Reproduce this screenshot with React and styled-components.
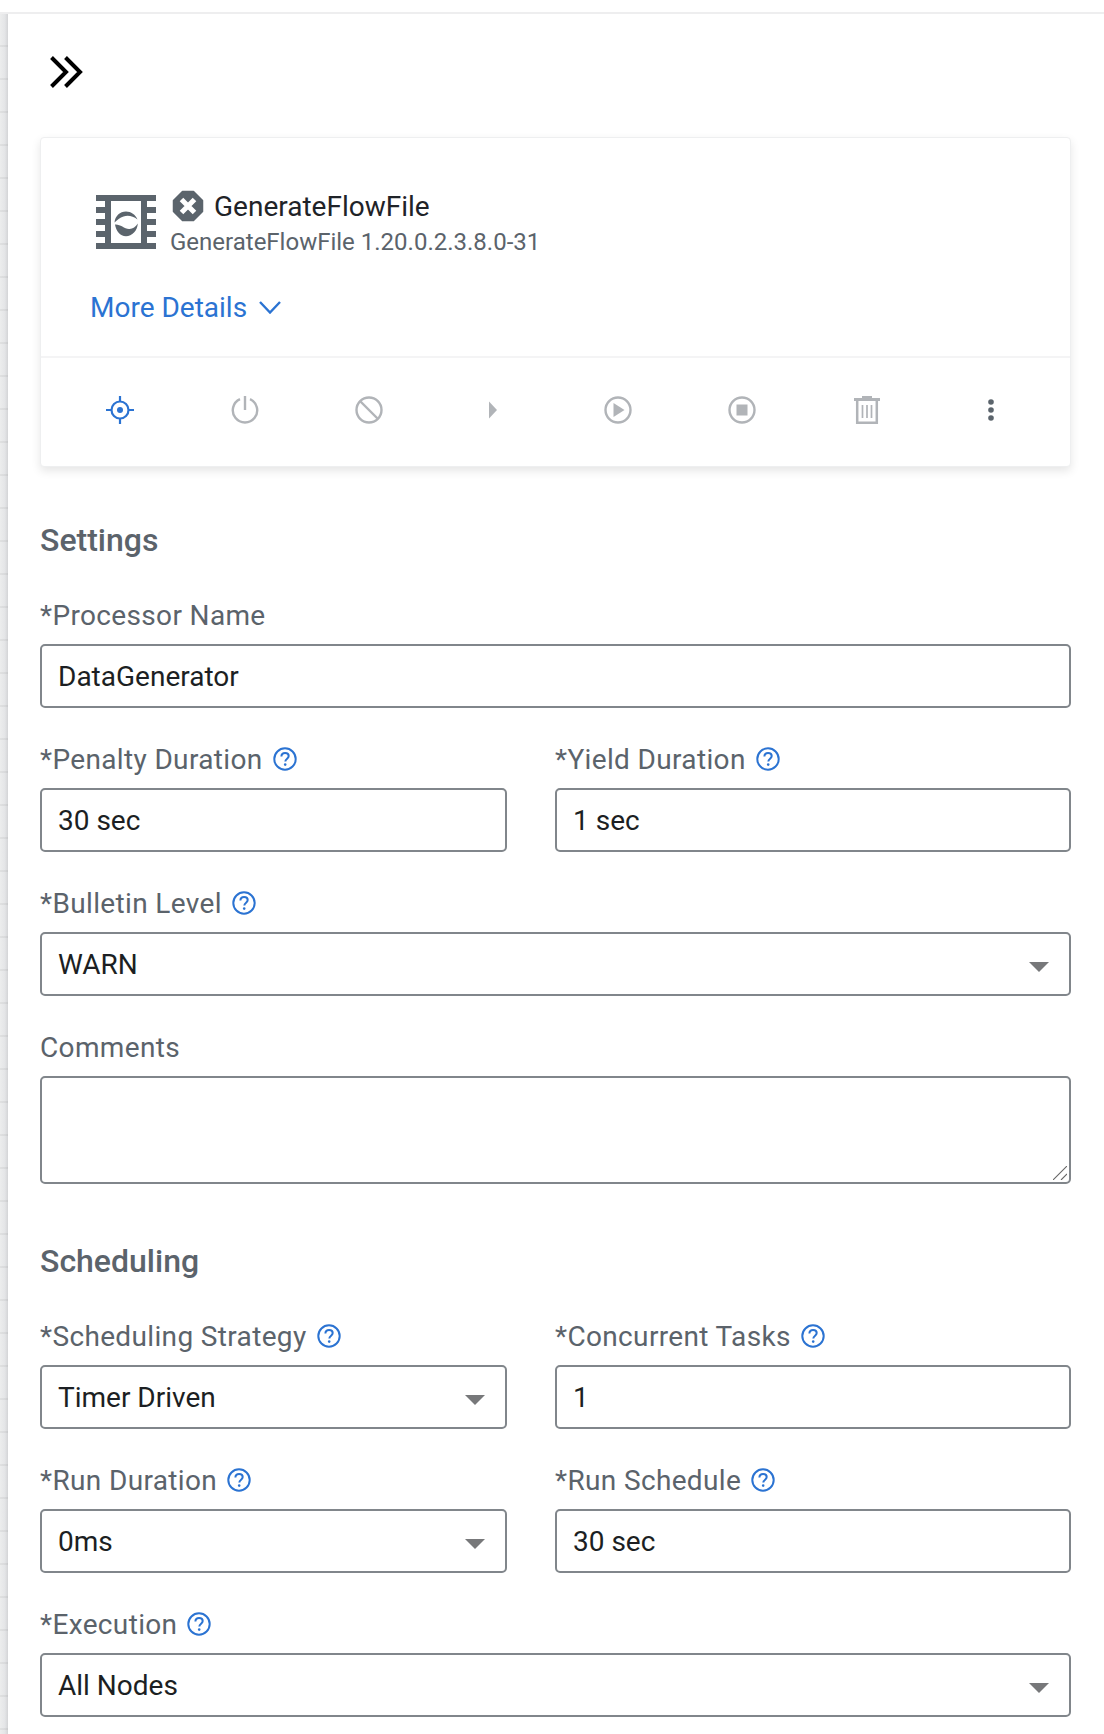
import React from "react";
import styled, { createGlobalStyle } from "styled-components";

const Global = createGlobalStyle`
  html, body { margin: 0; padding: 0; background: #fff; }
  body { font-family: Roboto, "Liberation Sans", sans-serif; }
`;

const Page = styled.div`
  width: 1104px;
  height: 1734px;
  overflow: hidden;
  display: flex;
  flex-direction: column;
  background: #fff;
`;
const TopStrip = styled.div`
  height: 12px;
  flex: none;
  border-bottom: 2px solid #eeeeef;
  background: #fff;
`;
const Body = styled.div`
  flex: 1;
  display: flex;
  min-height: 0;
`;
const Gutter = styled.div`
  width: 8px;
  flex: none;
  background:
    repeating-linear-gradient(180deg, transparent 0 31px, rgba(0,0,0,0.05) 31px 33px),
    linear-gradient(90deg, #eceded, #e4e5e7 60%, #d3d4d6);
`;
const Panel = styled.main`
  flex: 1;
  min-width: 0;
  padding: 42px 33px 0 32px;
  display: flex;
  flex-direction: column;
`;
const CollapseButton = styled.div`
  height: 32px;
  padding-left: 10px;
  display: flex;
  align-items: center;
  margin-bottom: 49px;
`;
const Card = styled.section`
  border-radius: 4px;
  border: 1px solid #eeeff0;
  box-shadow: 0 4px 10px rgba(0, 0, 0, 0.1);
  background: #fff;
  height: 328px;
  display: flex;
  flex-direction: column;
  flex: none;
`;
const CardTop = styled.div`
  height: 220px;
  flex: none;
  padding: 52px 0 0 49px;
  border-bottom: 2px solid #f4f4f5;
  box-sizing: border-box;
`;
const TitleRow = styled.div`
  display: flex;
  align-items: flex-start;
  padding-left: 6px;
`;
const ChipWrap = styled.div`
  margin-top: 5px;
  flex: none;
  line-height: 0;
`;
const TitleText = styled.div`
  margin-left: 14px;
`;
const TitleLine = styled.div`
  display: flex;
  align-items: center;
  height: 32px;
  font-size: 28px;
  color: #1f2328;
  margin-left: 2px;
`;
const TitleLabel = styled.span`
  margin-left: 10px;
`;
const Version = styled.div`
  font-size: 24px;
  color: #5b636b;
  margin-top: 6px;
`;
const MoreDetails = styled.div`
  margin-top: 35px;
  display: flex;
  align-items: center;
  gap: 12px;
  font-size: 28px;
  color: #2b73d2;
`;
const Toolbar = styled.div`
  flex: 1;
  display: grid;
  grid-template-columns: repeat(8, 124.4px);
  padding: 0 0 4px 17px;
  align-items: center;
  justify-items: center;
`;
const SectionTitle = styled.h2`
  margin: 0;
  font-size: 32px;
  font-weight: 500;
  line-height: 38px;
  color: #5b636b;
`;
const Form = styled.div`
  display: flex;
  flex-direction: column;
  padding-top: 54px;
`;
const Fields = styled.div`
  display: grid;
  grid-template-columns: 467px 516px;
  column-gap: 48px;
  row-gap: 36px;
  margin-top: 41px;
  margin-bottom: ${p => p.$after || 0}px;
`;
const Field = styled.div`
  grid-column: ${p => (p.$wide ? "1 / -1" : "auto")};
`;
const Label = styled.div`
  display: flex;
  align-items: center;
  gap: 10px;
  height: 30px;
  margin-bottom: 14px;
  font-size: 28px;
  letter-spacing: 0.35px;
  color: #5b636b;
`;
const Control = styled.div`
  position: relative;
  box-sizing: border-box;
  height: ${p => p.$height || 64}px;
  border: 2px solid #81868b;
  border-radius: 5px;
  padding: 15px 16px 0;
  font-size: 28px;
  line-height: 32px;
  color: #1c1f23;
`;
const Caret = styled.span`
  position: absolute;
  right: 20px;
  top: 28px;
  width: 0;
  height: 0;
  border-left: 10px solid transparent;
  border-right: 10px solid transparent;
  border-top: 10px solid #77787a;
`;
const Grip = styled.svg`
  position: absolute;
  right: 2px;
  bottom: 2px;
`;

const Chevrons = () => (
  <svg width="33" height="32" viewBox="0 0 33 32" fill="none" stroke="#000" strokeWidth="4">
    <path d="M1.500 1.500 L16 16 L1.500 30.500" />
    <path d="M15.500 1.500 L30 16 L15.500 30.500" />
  </svg>
);

const ChipIcon = () => (
  <svg width="60" height="54" viewBox="0 0 60 54">
    <path
      fill="#5b646c"
      fillRule="evenodd"
      d="M0 0H60V6H51V12H60V18H51V24H60V30H51V36H60V42H51V48H60V54H0V48H9V42H0V36H9V30H0V24H9V18H0V12H9V6H0Z M15 6V48H45V6Z"
    />
    <path
      fill="#5b646c"
      d="M18.500 27.500C19 21 24 16.500 30 16.500C35 16.500 39.500 19.500 41.500 24.500C37 21 32 20 27.500 21.500C24 22.500 21 25 18.500 27.500Z"
    />
    <path
      fill="#5b646c"
      d="M19 29.500C24 29 28 33.500 33 34C36.500 34.300 39.500 32 41.800 28.500C41.500 35.500 36 41.300 30 41.300C24 41.300 20 36 19 29.500Z"
    />
  </svg>
);

const StatusIcon = () => (
  <svg width="32" height="32" viewBox="0 0 32 32">
    <path fill="#5b646c" stroke="#5b646c" strokeWidth="1.500" strokeLinejoin="round" d="M10.500 1.500H21.500L30.500 10.500V21.500L21.500 30.500H10.500L1.500 21.500V10.500Z" />
    <path stroke="#fff" strokeWidth="5" d="M9.500 9.500L22.500 22.500M22.500 9.500L9.500 22.500" />
  </svg>
);

const ChevronDown = () => (
  <svg width="22" height="13" viewBox="0 0 22 13" fill="none" stroke="#2b73d2" strokeWidth="2.400">
    <path d="M1 1L11 11.500L21 1" />
  </svg>
);

const Help = () => (
  <svg width="24" height="24" viewBox="0 0 24 24" fill="none">
    <circle cx="12" cy="12" r="10.700" stroke="#2b73d2" strokeWidth="2" />
    <path d="M8.400 9.500c0-2.200 1.600-3.500 3.700-3.500s3.600 1.300 3.600 3.100c0 2.600-3.200 2.600-3.400 5.400" stroke="#2b73d2" strokeWidth="2" />
    <circle cx="12.200" cy="17.600" r="1.300" fill="#2b73d2" />
  </svg>
);

const gray = "#b1b4b8";

const icons = [
  <svg key="a" width="28" height="28" viewBox="0 0 28 28" fill="none" stroke="#2b73d2" strokeWidth="2.200">
    <circle cx="14" cy="14" r="8.500" />
    <circle cx="14" cy="14" r="3" fill="#2b73d2" stroke="none" />
    <path d="M14 0V5.500M14 22.500V28M0 14H5.500M22.500 14H28" />
  </svg>,
  <svg key="b" width="28" height="28" viewBox="0 0 28 28" fill="none" stroke={gray} strokeWidth="2.400">
    <path d="M9 3.200A12.200 12.200 0 1 0 19 3.200" />
    <path d="M14 0V14" />
  </svg>,
  <svg key="c" width="28" height="28" viewBox="0 0 28 28" fill="none" stroke={gray} strokeWidth="2.400">
    <circle cx="14" cy="14" r="12.500" />
    <path d="M5 5L23 23" />
  </svg>,
  <svg key="d" width="10" height="18" viewBox="0 0 10 18">
    <path fill={gray} d="M1 0.500L9 9L1 17.500Z" />
  </svg>,
  <svg key="e" width="28" height="28" viewBox="0 0 28 28" fill="none" stroke={gray} strokeWidth="2.400">
    <circle cx="14" cy="14" r="12.500" />
    <path fill={gray} stroke="none" d="M9.500 7L20.500 14L9.500 21Z" />
  </svg>,
  <svg key="f" width="28" height="28" viewBox="0 0 28 28" fill="none" stroke={gray} strokeWidth="2.400">
    <circle cx="14" cy="14" r="12.500" />
    <rect x="8.500" y="8.500" width="11" height="11" fill={gray} stroke="none" />
  </svg>,
  <svg key="g" width="28" height="28" viewBox="0 0 28 28" fill="none" stroke={gray}>
    <path fill={gray} stroke="none" d="M9 0H19V2H27V5H1V2H9Z" />
    <path strokeWidth="2.500" d="M4.200 4V26.800H23.800V4" />
    <path strokeWidth="1.700" d="M9.500 9V22M14 9V22M18.500 9V22" />
  </svg>,
  <svg key="h" width="8" height="24" viewBox="0 0 8 24" fill="#5b646c">
    <circle cx="4" cy="4" r="2.800" />
    <circle cx="4" cy="12" r="2.800" />
    <circle cx="4" cy="20" r="2.800" />
  </svg>,
];

const FieldBlock = ({ label, help, value, select, wide, height, grip }) => (
  <Field $wide={wide}>
    <Label>
      {label}
      {help && <Help />}
    </Label>
    <Control $height={height}>
      {value}
      {select && <Caret />}
      {grip && (
        <Grip width="14" height="14" viewBox="0 0 14 14" stroke="#666" strokeWidth="1.100">
          <path d="M0 14L14 0M8 14L14 8" />
        </Grip>
      )}
    </Control>
  </Field>
);

export default function App() {
  return (
    <Page>
      <Global />
      <TopStrip />
      <Body>
        <Gutter />
        <Panel>
          <CollapseButton><Chevrons /></CollapseButton>
          <Card>
            <CardTop>
              <TitleRow>
                <ChipWrap><ChipIcon /></ChipWrap>
                <TitleText>
                  <TitleLine><StatusIcon /><TitleLabel>GenerateFlowFile</TitleLabel></TitleLine>
                  <Version>GenerateFlowFile 1.20.0.2.3.8.0-31</Version>
                </TitleText>
              </TitleRow>
              <MoreDetails>More Details <ChevronDown /></MoreDetails>
            </CardTop>
            <Toolbar>{icons}</Toolbar>
          </Card>
          <Form>
            <SectionTitle>Settings</SectionTitle>
            <Fields $after={58}>
              <FieldBlock wide label="*Processor Name" value="DataGenerator" />
              <FieldBlock help label="*Penalty Duration" value="30 sec" />
              <FieldBlock help label="*Yield Duration" value="1 sec" />
              <FieldBlock wide select help label="*Bulletin Level" value="WARN" />
              <FieldBlock wide grip label="Comments" height={108} />
            </Fields>
            <SectionTitle>Scheduling</SectionTitle>
            <Fields>
              <FieldBlock select help label="*Scheduling Strategy" value="Timer Driven" />
              <FieldBlock help label="*Concurrent Tasks" value="1" />
              <FieldBlock select help label="*Run Duration" value="0ms" />
              <FieldBlock help label="*Run Schedule" value="30 sec" />
              <FieldBlock wide select help label="*Execution" value="All Nodes" />
            </Fields>
          </Form>
        </Panel>
      </Body>
    </Page>
  );
}
